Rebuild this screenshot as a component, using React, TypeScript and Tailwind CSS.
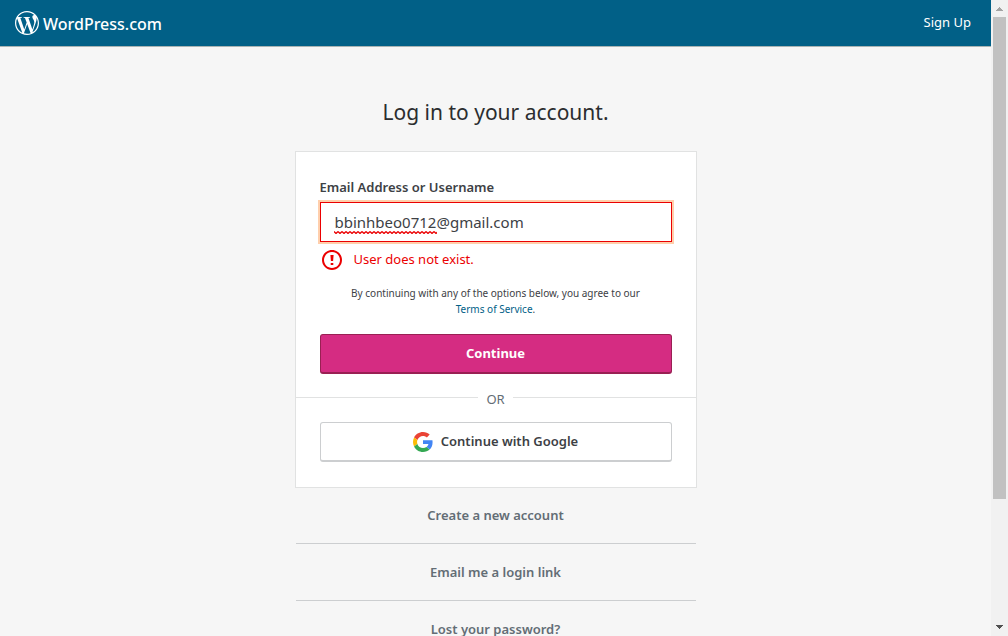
import { useState } from "react";
import { SiWordpress } from "react-icons/si";

function GoogleLogo() {
  return (
    <svg viewBox="0 0 48 48" className="h-5 w-5" aria-hidden="true">
      <path fill="#EA4335" d="M24 9.5c3.54 0 6.71 1.22 9.21 3.6l6.85-6.85C35.9 2.38 30.47 0 24 0 14.62 0 6.51 5.38 2.56 13.22l7.98 6.19C12.43 13.72 17.74 9.5 24 9.5z" />
      <path fill="#4285F4" d="M46.98 24.55c0-1.57-.15-3.09-.38-4.55H24v9.02h12.94c-.58 2.96-2.26 5.48-4.78 7.18l7.73 6c4.51-4.18 7.09-10.36 7.09-17.65z" />
      <path fill="#FBBC05" d="M10.53 28.59c-.48-1.45-.76-2.99-.76-4.59s.27-3.14.76-4.59l-7.98-6.19C.92 16.46 0 20.12 0 24c0 3.88.92 7.54 2.56 10.78l7.97-6.19z" />
      <path fill="#34A853" d="M24 48c6.48 0 11.93-2.13 15.89-5.81l-7.73-6c-2.15 1.45-4.92 2.3-8.16 2.3-6.26 0-11.57-4.22-13.47-9.91l-7.98 6.19C6.51 42.62 14.62 48 24 48z" />
    </svg>
  );
}

function NoticeIcon() {
  return (
    <svg viewBox="0 0 24 24" className="h-6 w-6 shrink-0" fill="#eb0001" aria-hidden="true">
      <path d="M12 4c4.411 0 8 3.589 8 8s-3.589 8-8 8-8-3.589-8-8 3.589-8 8-8m0-2C6.477 2 2 6.477 2 12s4.477 10 10 10 10-4.477 10-10S17.523 2 12 2zm1.300 13h-2.600v2h2.600v-2zm-.2-2l.5-6h-3.200l.5 6h2.200z" />
    </svg>
  );
}

function SpellingMark() {
  return (
    <svg className="pointer-events-none absolute bottom-2 left-3.5 h-[3px] w-[103px]" aria-hidden="true">
      <defs>
        <pattern id="wave" width="4" height="3" patternUnits="userSpaceOnUse">
          <path d="M0 0.5L2 2.5L4 0.5" fill="none" stroke="#eb0001" strokeWidth="1.3" />
        </pattern>
      </defs>
      <rect width="103" height="3" fill="url(#wave)" />
    </svg>
  );
}

function ScrollBar() {
  return (
    <div className="flex w-[17px] shrink-0 flex-col items-center bg-[#f1f1f1]" aria-hidden="true">
      <svg viewBox="0 0 17 17" className="h-[17px] w-[17px] shrink-0" shapeRendering="crispEdges">
        <path d="M5 11h7L8.500 7z" fill="#a3a3a3" />
      </svg>
      <div className="flex w-full grow flex-col px-0.5">
        <div className="h-4/5 bg-[#c1c1c1]" />
      </div>
      <svg viewBox="0 0 17 17" className="h-[17px] w-[17px] shrink-0" shapeRendering="crispEdges">
        <path d="M5 6h7L8.500 10z" fill="#505050" />
      </svg>
    </div>
  );
}

const links = ["Create a new account", "Email me a login link", "Lost your password?"];

export default function App() {
  const [email, setEmail] = useState("bbinhbeo0712@gmail.com");

  return (
    <div className="flex h-screen overflow-hidden bg-[#f6f6f6] font-['Noto_Sans','Open_Sans',sans-serif] text-[#3d4145]">
      <div className="min-w-0 grow overflow-hidden">
        <header className="flex h-[47px] items-center justify-between border-b border-[#a9b4b4] bg-[#016087] pr-5 pl-[15px] text-white">
          <a href="#home" className="flex items-center gap-1">
            <SiWordpress className="h-6 w-6" aria-hidden="true" />
            <span className="pt-px text-base font-medium">WordPress.com</span>
          </a>
          <a href="#signup" className="text-[13px]">Sign Up</a>
        </header>

        <main className="mx-auto w-full max-w-[402px] pt-12">
          <h1 className="pt-px text-center text-[21px] leading-8 text-[#2b2d2f]">Log in to your account.</h1>

          <form className="mt-[23px] border border-[#e1e2e2] bg-white" onSubmit={(e) => e.preventDefault()}>
            <div className="px-6 pt-6">
              <label htmlFor="email" className="block text-[13px] leading-[22px] font-semibold">
                Email Address or Username
              </label>
              <div className="relative mt-1">
                <input
                  id="email"
                  type="text"
                  value={email}
                  onChange={(e) => setEmail(e.target.value)}
                  className="block h-10 w-full border border-[#eb0001] bg-white px-3.5 text-[15px] shadow-[0_0_0_2px_#ffcfac] outline-none"
                />
                <SpellingMark />
              </div>
              <p className="mt-1.5 flex gap-2.5 text-[13px] leading-[22px] text-[#eb0001]">
                <NoticeIcon />
                User does not exist.
              </p>
              <p className="mt-[13px] px-5 text-center text-[10px] leading-4">
                By continuing with any of the options below, you agree to our{" "}
                <a href="#terms" className="text-[#016087]">Terms of Service</a>.
              </p>
              <button type="submit" className="mt-[17px] block h-10 w-full rounded-[3px] border border-b-2 border-[#992053] bg-[#d52c82] text-[13px] font-bold text-white">
                Continue
              </button>
            </div>

            <div className="mt-4 mb-3.5 flex gap-2 text-[13px] leading-[18px] text-[#636d75]">
              <span className="mt-[7px] h-px grow bg-[#e1e2e2]" />
              <span>OR</span>
              <span className="mt-[7px] h-px grow bg-[#e1e2e2]" />
            </div>

            <div className="px-6 pb-[25px]">
              <button type="button" className="flex h-10 w-full items-center justify-center gap-2 rounded-[3px] border border-b-2 border-[#ccced0] bg-white text-[13px] font-semibold">
                <GoogleLogo />
                Continue with Google
              </button>
            </div>
          </form>

          <nav className="px-px">
            <ul className="divide-y divide-[#ccced0]">
              {links.map((text) => (
                <li key={text} className="first:-mt-px">
                  <a href="#account" className="block py-[18px] text-center text-[13px] leading-5 font-semibold text-[#636d75]">
                    {text}
                  </a>
                </li>
              ))}
            </ul>
          </nav>
        </main>
      </div>
      <ScrollBar />
    </div>
  );
}
